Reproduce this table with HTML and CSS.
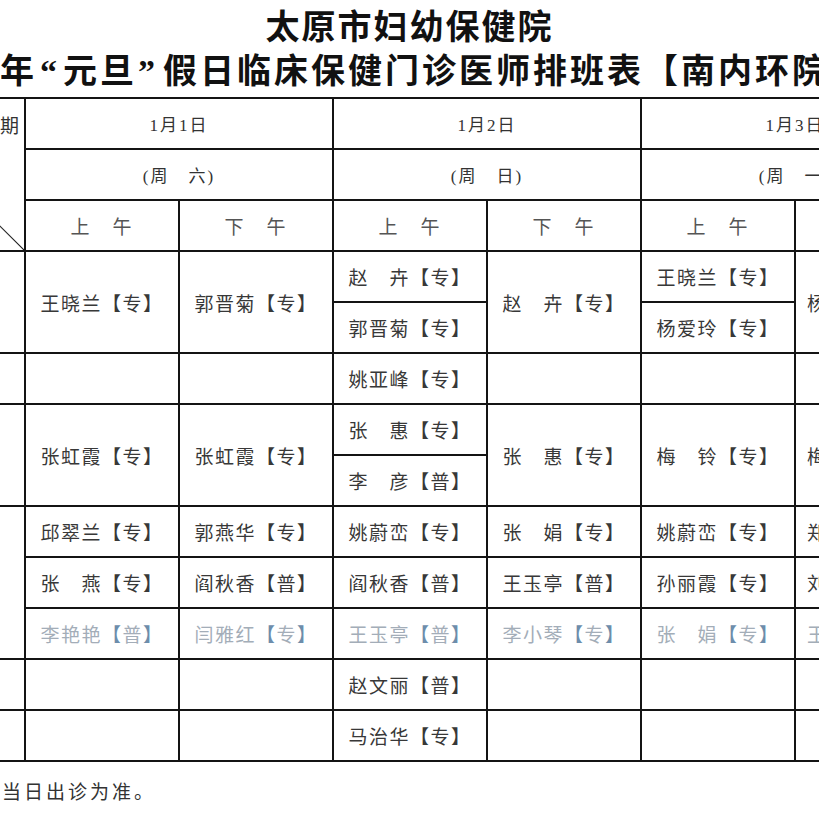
FILE: index.html
```html
<!DOCTYPE html>
<html lang="zh-CN">
<head>
<meta charset="utf-8">
<title>太原市妇幼保健院 元旦假日门诊排班表</title>
<link rel="stylesheet" href="styles.css">
</head>
<body>
<div class="page">
  <h1 class="title">太原市妇幼保健院</h1>
  <h2 class="subtitle">年<span class="q q-open">“</span>元旦<span class="q q-close">”</span>假日临床保健门诊医师排班表【南内环院</h2>
  <div class="table-wrap">
    <table class="schedule">
      <colgroup>
        <col class="c"><col class="c"><col class="c"><col class="c"><col class="c"><col class="c"><col class="c">
      </colgroup>
      <tr class="head">
        <td class="corner" rowspan="3">期</td>
        <td class="date" colspan="2">1月1日</td>
        <td class="date" colspan="2">1月2日</td>
        <td class="date" colspan="2">1月3日</td>
      </tr>
      <tr class="head">
        <td class="week" colspan="2">(周　六)</td>
        <td class="week" colspan="2">(周　日)</td>
        <td class="week" colspan="2">(周　一)</td>
      </tr>
      <tr class="head">
        <td class="half">上　午</td>
        <td class="half">下　午</td>
        <td class="half">上　午</td>
        <td class="half">下　午</td>
        <td class="half">上　午</td>
        <td class="half">下　午</td>
      </tr>

      <tr>
        <td rowspan="2"></td>
        <td rowspan="2">王晓兰【专】</td>
        <td rowspan="2">郭晋菊【专】</td>
        <td>赵　卉【专】</td>
        <td rowspan="2">赵　卉【专】</td>
        <td>王晓兰【专】</td>
        <td class="cut" rowspan="2">杨</td>
      </tr>
      <tr>
        <td>郭晋菊【专】</td>
        <td>杨爱玲【专】</td>
      </tr>

      <tr>
        <td></td>
        <td></td>
        <td></td>
        <td>姚亚峰【专】</td>
        <td></td>
        <td></td>
        <td></td>
      </tr>

      <tr>
        <td rowspan="2"></td>
        <td rowspan="2">张虹霞【专】</td>
        <td rowspan="2">张虹霞【专】</td>
        <td>张　惠【专】</td>
        <td rowspan="2">张　惠【专】</td>
        <td rowspan="2">梅　铃【专】</td>
        <td class="cut" rowspan="2">梅</td>
      </tr>
      <tr>
        <td>李　彦【普】</td>
      </tr>

      <tr>
        <td rowspan="3"></td>
        <td>邱翠兰【专】</td>
        <td>郭燕华【专】</td>
        <td>姚蔚峦【专】</td>
        <td>张　娟【专】</td>
        <td>姚蔚峦【专】</td>
        <td class="cut">郑</td>
      </tr>
      <tr>
        <td>张　燕【专】</td>
        <td>阎秋香【普】</td>
        <td>阎秋香【普】</td>
        <td>王玉亭【普】</td>
        <td>孙丽霞【专】</td>
        <td class="cut">刘</td>
      </tr>
      <tr class="faded">
        <td>李艳艳<span class="bk">【</span>普<span class="bk">】</span></td>
        <td>闫雅红<span class="bk">【</span>专<span class="bk">】</span></td>
        <td>王玉亭<span class="bk">【</span>普<span class="bk">】</span></td>
        <td>李小琴<span class="bk">【</span>专<span class="bk">】</span></td>
        <td>张　娟<span class="bk">【</span>专<span class="bk">】</span></td>
        <td class="cut">王</td>
      </tr>

      <tr>
        <td></td>
        <td></td>
        <td></td>
        <td>赵文丽【普】</td>
        <td></td>
        <td></td>
        <td></td>
      </tr>
      <tr>
        <td></td>
        <td></td>
        <td></td>
        <td>马治华【专】</td>
        <td></td>
        <td></td>
        <td></td>
      </tr>
    </table>
  </div>
  <p class="note">当日出诊为准。</p>
</div>
</body>
</html>
```

FILE: styles.css
```css
html, body {
  margin: 0;
  padding: 0;
  overflow: hidden;
  background: #ffffff;
}

body {
  width: 819px;
  height: 819px;
  font-family: "Noto Sans CJK SC", sans-serif;
  color: #333333;
}

.page {
  padding-top: 3px;
}

.title,
.subtitle {
  margin: 0;
  height: 44px;
  font-size: 34px;
  line-height: 44px;
  font-weight: 700;
  color: #111111;
  white-space: nowrap;
}

.title {
  text-align: center;
  letter-spacing: 2px;
}

.subtitle {
  letter-spacing: 3px;
}

.q {
  font-family: "Liberation Serif", serif;
  font-weight: 700;
  line-height: 1;
}

.q-open {
  margin-left: 3px;
  margin-right: 3px;
}

.q-close {
  margin-left: 1px;
  margin-right: 5px;
}

.table-wrap {
  margin-top: 6px;
  width: 819px;
  overflow: hidden;
}

.schedule {
  border-collapse: collapse;
  table-layout: fixed;
  width: 1078px;
  margin-left: -130px;
}

.schedule .c {
  width: 154px;
}

.schedule tr {
  height: 51px;
}

.schedule td {
  border: 2px solid #141414;
  padding: 0;
  text-align: center;
  vertical-align: middle;
  font-size: 19px;
  letter-spacing: 1.5px;
  font-weight: 400;
  color: #383838;
  white-space: nowrap;
  overflow: hidden;
}

.schedule .corner {
  vertical-align: top;
  text-align: right;
  padding: 12px 5px 0 0;
  letter-spacing: 0;
  color: #333333;
  background: linear-gradient(to top right, transparent calc(50% - 1px), #222222 50%, transparent calc(50% + 1px));
}

.schedule .date,
.schedule .week {
  font-family: "Liberation Serif", "Noto Sans CJK SC", serif;
  font-size: 17px;
  letter-spacing: 2px;
  color: #333333;
}

.schedule .half {
  font-size: 19px;
  letter-spacing: 2px;
  color: #555555;
}

.schedule .cut {
  text-align: left;
  padding-left: 11px;
}

.schedule .faded td {
  color: #a3adb8;
}

.schedule .faded .bk {
  color: #6d8dab;
}

.note {
  margin: 15px 0 0 2px;
  font-size: 19px;
  letter-spacing: 3px;
  color: #333333;
}
```
